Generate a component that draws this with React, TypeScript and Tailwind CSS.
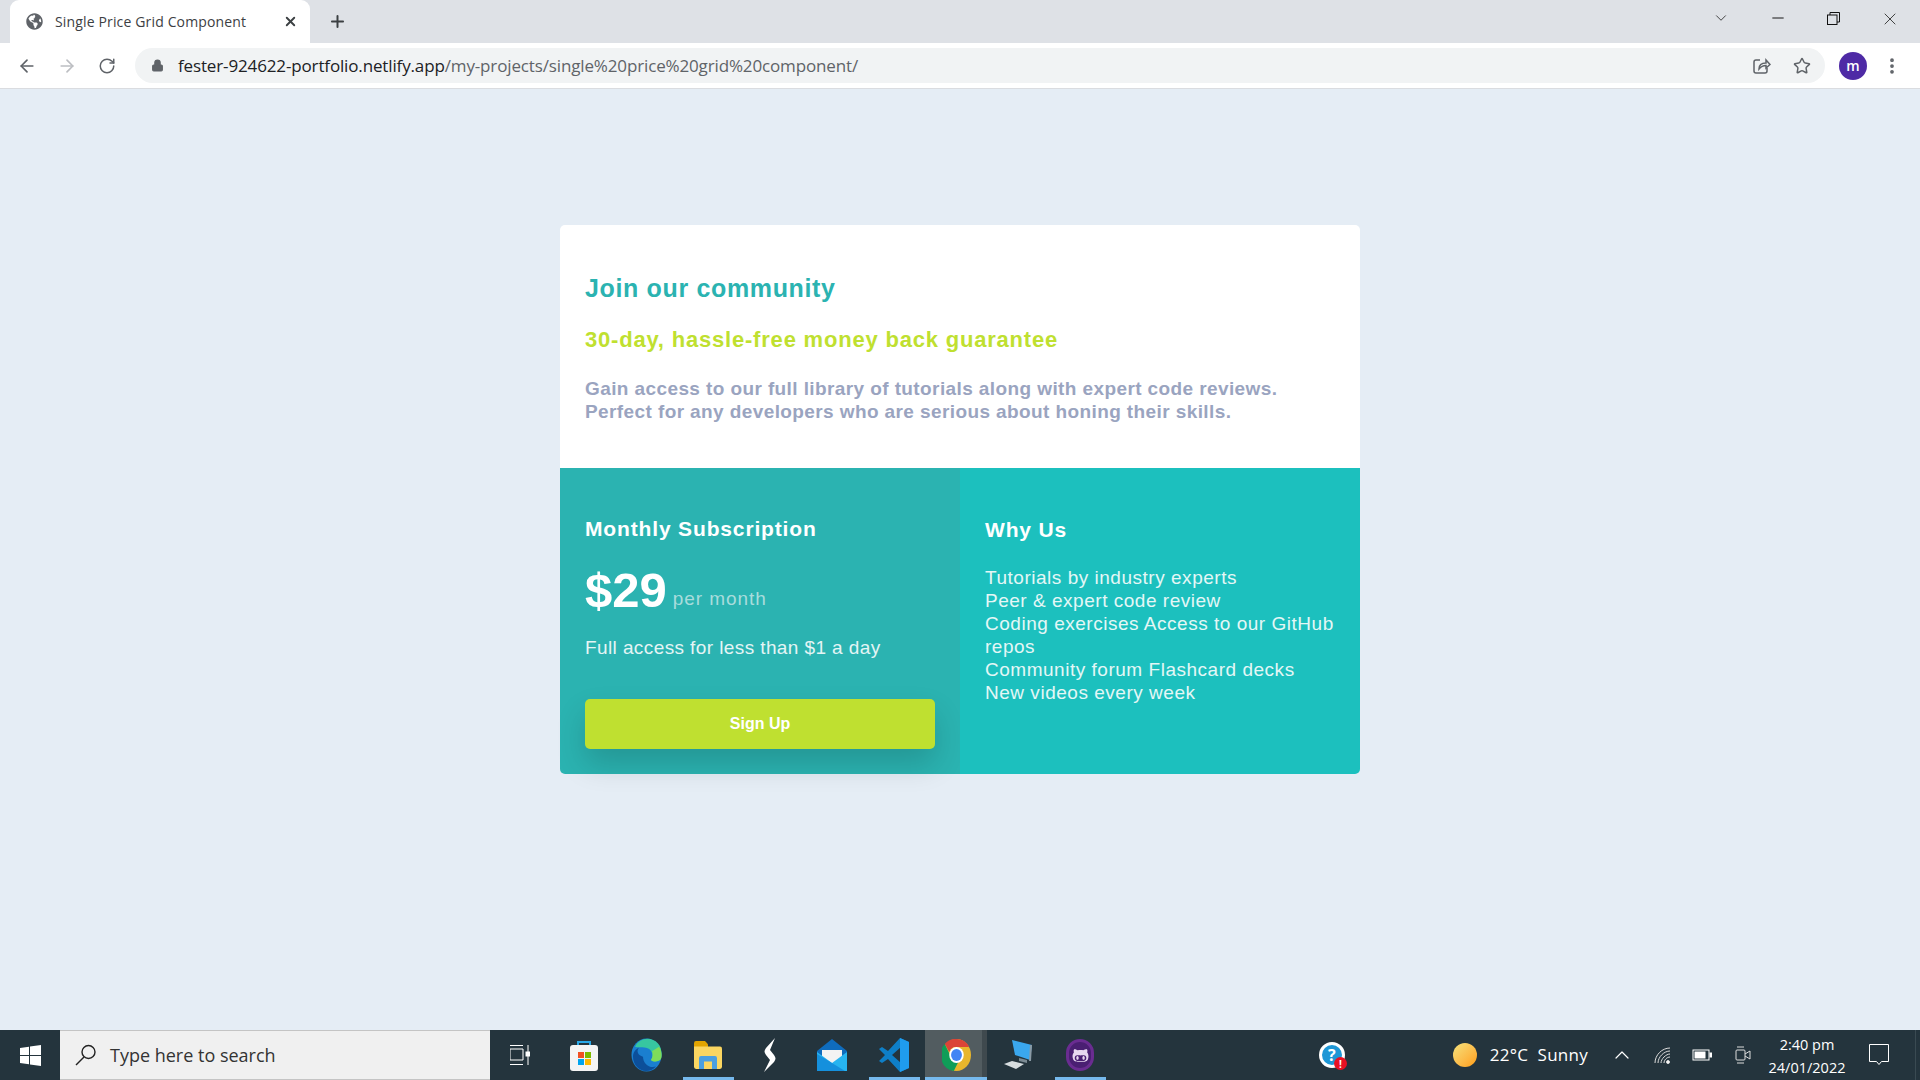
import { ArrowLeft, ArrowRight, RotateCw, Lock, Star, X, Plus, Minus, ChevronDown, ChevronUp, EllipsisVertical } from "lucide-react";
import { FaGlobeAmericas, FaGithubAlt } from "react-icons/fa";

const why = ["Tutorials by industry experts", "Peer & expert code review", "Coding exercises Access to our GitHub repos", "Community forum Flashcard decks", "New videos every week"];

function Store() {
  return (
    <svg width="30" height="32" viewBox="0 0 30 32">
      <path d="M9 8V3h12v5" fill="none" stroke="#29a8e8" strokeWidth="2" />
      <rect x="1" y="6" width="28" height="26" rx="3" fill="#f4f4f4" />
      <rect x="9" y="13" width="6" height="6" fill="#f25022" />
      <rect x="16" y="13" width="6" height="6" fill="#7fba00" />
      <rect x="9" y="20" width="6" height="6" fill="#00a4ef" />
      <rect x="16" y="20" width="6" height="6" fill="#ffb900" />
    </svg>
  );
}
function Edge() {
  return (
    <svg width="31" height="34" viewBox="0 0 31 31" preserveAspectRatio="none">
      <circle cx="15.5" cy="15.5" r="15" fill="#1a7fd0" />
      <path d="M4 8C8 0 20-2 27 5c4 4 4 10 3 14-2 3-8 3-10 1 3-4 1-10-5-11C10 8 6 9 4 8z" fill="#37c6a0" />
      <path d="M28 8c3 4 3 9 2 11-2 3-8 3-10 1 2-3 2-6 1-8z" fill="#7fdc5a" />
      <path d="M12 17c0 6 6 11 13 9-3 3-6 4-10 4C8 30 2 24 2 17c0-4 3-7 6-8-3 3-1 7 4 8z" fill="#0c4f9a" />
    </svg>
  );
}
function Folder() {
  return (
    <svg width="28" height="28" viewBox="0 0 28 26" preserveAspectRatio="none">
      <path d="M0 2a2 2 0 0 1 2-2h9l3 3v4H0z" fill="#e2a400" />
      <path d="M0 5h26a2 2 0 0 1 2 2v17a2 2 0 0 1-2 2H2a2 2 0 0 1-2-2z" fill="#fbd661" />
      <path d="M5 26V16a2 2 0 0 1 2-2h14a2 2 0 0 1 2 2v10h-5v-7h-8v7z" fill="#4b9fe0" />
    </svg>
  );
}
function Bolt() {
  return (
    <svg width="14" height="34" viewBox="0 0 14 34">
      <path d="M12 0 3 10c-2 3-2 4 0 7l4 5-6 12 10-10c2-3 2-4 0-7L7 12z" fill="#fff" />
    </svg>
  );
}
function Mail() {
  return (
    <svg width="30" height="32" viewBox="0 0 30 32">
      <path d="M0 12 15 0l15 12v20H0z" fill="#0f6cbd" />
      <path d="M5 11h20v9l-10 5-10-5z" fill="#f3f3f3" />
      <path d="M0 13l15 11 15-11v19H0z" fill="#27b4f0" />
      <path d="M0 32V15l15 9 13 8z" fill="#1590dd" />
    </svg>
  );
}
function VSCode() {
  return (
    <svg width="30" height="34" viewBox="0 0 30 34">
      <path d="M21 0 9 13 3 9 0 11l6 6-6 6 3 2 6-4 12 13 9-4V4zM22 9v16l-9-8z" fill="#0e7fc8" />
      <path d="M21 0l9 4v26l-9 4z" fill="#1f9cee" />
    </svg>
  );
}
function Chrome() {
  return (
    <svg width="29" height="32" viewBox="0 0 32 32" preserveAspectRatio="none">
      <circle cx="16" cy="16" r="16" fill="#e8b62c" />
      <path d="M16 0a16 16 0 0 1 14 8H16a8 8 0 0 0-8 5L3 5a16 16 0 0 1 13-5z" fill="#db4437" />
      <path d="M3 5l7 13a7 7 0 0 0 8 5l-5 9A16 16 0 0 1 3 5z" fill="#0f9d58" />
      <circle cx="16" cy="16" r="8" fill="#fff" />
      <circle cx="16" cy="16" r="6" fill="#4285f4" />
    </svg>
  );
}
function Monitor() {
  return (
    <svg width="30" height="30" viewBox="0 0 30 30">
      <path d="M9 0l20 5-2 15-15-5z" fill="#3aa7ee" />
      <path d="M27 5h2l-1 16h-2z" fill="#8a9aa5" />
      <path d="M16 18l8 2v3l-8-2z" fill="#7b8a93" />
      <path d="M1 24l8-3 12 3-8 5z" fill="#d7dde0" />
    </svg>
  );
}
function Github() {
  return (
    <div className="flex h-[32px] w-[28px] items-center justify-center rounded-full border-[3px] border-[#6a2c91] bg-[#4a1f72]">
      <FaGithubAlt className="text-[17px] text-[#e8d8f0]" />
    </div>
  );
}
function Share() {
  return (
    <svg width="18" height="18" viewBox="0 0 18 18" fill="none" stroke="#5f6368" strokeWidth="1.5">
      <path d="M7 3H3a2 2 0 0 0-2 2v9a2 2 0 0 0 2 2h9a2 2 0 0 0 2-2v-3" />
      <path d="M6 12c0-4 3-6 7-6V3l4 4.5L13 11V8.5c-3 0-5 1-7 3.5z" />
    </svg>
  );
}

function TaskIcon({ children, active, running }: { children: React.ReactNode; active?: boolean; running?: boolean }) {
  return (
    <div className={`relative flex h-full w-[62px] shrink-0 items-center justify-center ${active ? "bg-[#525c60]" : ""}`}>
      {children}
      {active && <div className="absolute bottom-0 right-0 top-0 w-[5px] bg-[#3f494e]" />}
      {active && <div className="absolute bottom-0 left-0 right-0 h-[3px] bg-[#76b9ed]" />}
      {running && <div className="absolute bottom-0 left-[6px] right-[5px] h-[3px] bg-[#76b9ed]" />}
    </div>
  );
}

export default function App() {
  const karla = "font-['Liberation_Sans',Arial,sans-serif]";
  return (
    <div className="flex h-screen w-full flex-col overflow-hidden bg-[#e5edf5] font-['Open_Sans',sans-serif]">
      <div className="flex h-[43px] shrink-0 items-end bg-[#dee1e6] pl-[10px]">
        <div className="flex h-[43px] w-[300px] items-center rounded-t-[9px] bg-white pl-[16px] pr-[12px]">
          <FaGlobeAmericas className="text-[17px] text-[#5f6368]" />
          <span className="ml-[12px] flex-1 truncate pb-[1px] text-[14px] tracking-[0.15px] text-[#3c4043]">Single Price Grid Component</span>
          <X size={15} strokeWidth={3} className="text-[#3c4043]" />
        </div>
        <div className="ml-[18px] flex h-[43px] items-center">
          <Plus size={19} strokeWidth={2.5} className="text-[#3c4043]" />
        </div>
        <div className="flex-1" />
        <div className="flex h-[43px] items-start pt-[9px] text-[#333]">
          <ChevronDown size={18} strokeWidth={1.2} />
          <div className="ml-[39px]"><Minus size={18} strokeWidth={1.2} className="text-black" /></div>
          <svg className="ml-[40px] mt-[3px]" width="13" height="13" viewBox="0 0 13 13" fill="none" stroke="#111" strokeWidth="1">
            <rect x="0.5" y="3" width="9.500" height="9.500" />
            <path d="M3 3V.5h9.500V10H10" />
          </svg>
          <div className="ml-[40px] mr-[20px]"><X size={20} strokeWidth={1.1} /></div>
        </div>
      </div>

      <div className="flex h-[46px] shrink-0 items-center border-b border-[#dadce0] bg-white">
        <div className="flex w-[135px] items-center pl-[17px] text-[#5f6368]">
          <ArrowLeft size={20} />
          <ArrowRight size={20} className="ml-[20px] text-[#bcbec2]" />
          <RotateCw size={18} className="ml-[21px]" />
        </div>
        <div className="flex h-[35px] w-[1690px] items-center rounded-full bg-[#f1f3f4] pl-[16px]">
          <Lock size={13} fill="#5f6368" className="text-[#5f6368]" />
          <span className="ml-[14px] text-[17px] tracking-[-0.14px] text-[#202124]">
            fester-924622-portfolio.netlify.app<span className="text-[#5f6368]">/my-projects/single%20price%20grid%20component/</span>
          </span>
          <div className="flex-1" />
          <Share />
          <Star size={18} strokeWidth={2} className="ml-[22px] mr-[14px] text-[#5f6368]" />
        </div>
        <div className="ml-[14px] flex h-[28px] w-[28px] items-center justify-center rounded-full bg-[#4e2aa5] text-[14px] font-semibold text-white">m</div>
        <EllipsisVertical size={20} strokeWidth={2.5} className="ml-[15px] text-[#5f6368]" />
      </div>

      <main className="flex flex-1 justify-center pt-[136px]">
        <div className={`h-[549px] w-[800px] ${karla}`}>
          <section className="h-[243px] rounded-t-[5px] bg-white px-[25px] pt-[47px]">
            <h1 className="text-[25px] font-bold leading-[32px] tracking-[0.65px] text-[#2bb3b1]">Join our community</h1>
            <h2 className="mt-[20px] text-[22px] font-bold leading-[32px] tracking-[0.8px] text-[#bfe030]">30-day, hassle-free money back guarantee</h2>
            <p className="mt-[21px] text-[19px] font-bold leading-[23px] tracking-[0.4px] text-[#9aa4c0]">
              Gain access to our full library of tutorials along with expert code reviews.<br />
              Perfect for any developers who are serious about honing their skills.
            </p>
          </section>
          <div className="flex h-[306px]">
            <section className="w-[400px] rounded-bl-[5px] bg-[#2bb3b1] px-[25px] pt-[46px]">
              <h3 className="text-[21px] font-bold leading-[30px] tracking-[0.85px] text-white">Monthly Subscription</h3>
              <div className="mt-[18px] flex items-end">
                <span className="text-[49px] font-bold leading-[56px] text-white">$29</span>
                <span className="mb-[8px] ml-[6px] text-[19px] leading-[23px] tracking-[0.95px] text-[#a8dcdc]">per month</span>
              </div>
              <p className="mt-[16px] text-[19px] leading-[28px] tracking-[0.4px] text-[#e4f5f5]">Full access for less than $1 a day</p>
              <button className="mt-[37px] h-[50px] w-[350px] rounded-[5px] bg-[#bfe030] text-[16px] font-bold text-white shadow-[0_15px_30px_rgba(0,0,0,0.16)]">Sign Up</button>
            </section>
            <section className="w-[400px] rounded-br-[5px] bg-[#1cc0be] px-[25px] pt-[46px]">
              <h3 className="text-[21px] font-bold leading-[32px] tracking-[0.85px] text-white">Why Us</h3>
              <ul className="mt-[20px] text-[19px] leading-[23px] tracking-[0.52px] text-[#e4f7f6]">
                {why.map((w) => <li key={w}>{w}</li>)}
              </ul>
            </section>
          </div>
        </div>
      </main>

      <footer className="flex h-[50px] shrink-0 items-center bg-[#24343d] text-white">
        <div className="flex h-full w-[60px] items-center justify-center">
          <svg width="21" height="21" viewBox="0 0 21 21" fill="#fff"><path d="M0 3l9-1.300V10H0zM10 1.500 21 0v10H10zM0 11h9v8.300L0 18zM10 11h11v10l-11-1.500z" /></svg>
        </div>
        <div className="flex h-full w-[430px] items-center border-y border-[#c4c4c4] bg-[#f0f0f0] pl-[15px] text-[#333]">
          <svg width="22" height="22" viewBox="0 0 22 22" fill="none" stroke="#222" strokeWidth="1.4"><circle cx="13.5" cy="8" r="6.5" /><path d="M9 13 1 21" /></svg>
          <span className="ml-[13px] text-[18px] leading-none">Type here to search</span>
        </div>
        <div className="flex h-full w-[63px] items-center justify-center pr-[4px]">
          <svg width="20" height="20" viewBox="0 0 20 20" fill="none" stroke="#fff" strokeWidth="1"><path d="M0 .5h13M0 4h13v11H0zM0 19.500h13M18 0v7M18 11v9" /><rect x="16" y="7" width="3.500" height="4" fill="#fff" /></svg>
        </div>
        <TaskIcon><Store /></TaskIcon>
        <TaskIcon><Edge /></TaskIcon>
        <TaskIcon running><Folder /></TaskIcon>
        <TaskIcon><Bolt /></TaskIcon>
        <TaskIcon><Mail /></TaskIcon>
        <TaskIcon running><VSCode /></TaskIcon>
        <TaskIcon active><Chrome /></TaskIcon>
        <TaskIcon><Monitor /></TaskIcon>
        <TaskIcon running><Github /></TaskIcon>
        <div className="flex-1" />
        <div className="relative mr-[108px] flex h-[26px] w-[26px] items-center justify-center rounded-full border-[3px] border-white bg-[#1e97d6] text-[16px] font-bold leading-none">
          ?
          <span className="absolute -bottom-[5px] -right-[5px] flex h-[13px] w-[13px] items-center justify-center rounded-full bg-[#e81123] text-[10px] font-bold">!</span>
        </div>
        <div className="h-[24px] w-[24px] rounded-full bg-gradient-to-br from-[#f3e27a] to-[#ff9d00]" />
        <span className="ml-[13px] whitespace-pre text-[17px] tracking-[0.25px]">22°C  Sunny</span>
        <ChevronUp size={24} strokeWidth={1.2} className="ml-[22px]" />
        <svg className="ml-[20px]" width="17" height="17" viewBox="0 0 17 17" fill="none" stroke="#ddd" strokeWidth="1"><path d="M1 16C1 8 8 1 16 1M4 16c0-6 6-12 12-12M7 16c0-4 5-9 9-9M10 16c0-3 3-6 6-6" /><circle cx="14" cy="15" r="1.500" fill="#fff" /></svg>
        <svg className="ml-[21px]" width="20" height="12" viewBox="0 0 20 12" fill="none" stroke="#fff"><rect x="1" y="1" width="16" height="10" /><rect x="3" y="3" width="10" height="6" fill="#fff" /><rect x="18" y="4" width="1.500" height="4" fill="#fff" /></svg>
        <svg className="ml-[23px]" width="16" height="22" viewBox="0 0 16 22" fill="none" stroke="#ddd"><rect x="1" y="6" width="9" height="10" rx="1" /><path d="M10 10l5-3v8l-5-3M2 3h7M2 19h7" /></svg>
        <div className="ml-[6px] flex w-[100px] flex-col items-center pt-[1px] text-[14.5px] leading-[23px]">
          <span>2:40 pm</span>
          <span>24/01/2022</span>
        </div>
        <svg className="ml-[12px]" width="20" height="22" viewBox="0 0 20 22" fill="none" stroke="#fff" strokeWidth="1"><path d="M.5.5h19v17h-7l-2.500 3-2.500-3h-7z" /></svg>
        <div className="ml-[26px] h-full w-[5px] border-l border-[#3a4a52]" />
      </footer>
    </div>
  );
}
